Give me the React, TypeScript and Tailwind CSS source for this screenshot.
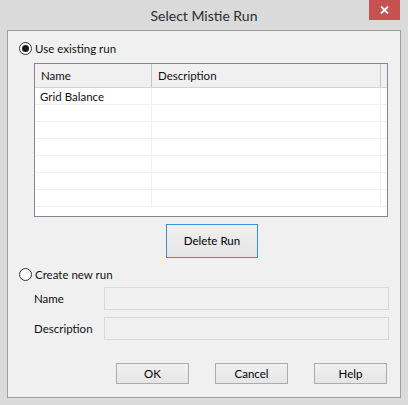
import React from 'react'

const font = { fontFamily: 'Lato, "Segoe UI", "Noto Sans", sans-serif' }

function Radio({ checked }: { checked?: boolean }) {
  return (
    <span className="flex h-[13px] w-[13px] items-center justify-center rounded-full border border-[#333] bg-white">
      {checked && <span className="h-[7px] w-[7px] rounded-full bg-[#1a1a1a]" />}
    </span>
  )
}

function Button({ label, focused, className }: { label: string; focused?: boolean; className?: string }) {
  return (
    <div
      className={
        'flex items-center justify-center text-[11.5px] text-black bg-gradient-to-b from-[#f0f0f0] to-[#e5e5e5] border ' +
        (focused ? 'border-[#3c8fe0] ' : 'border-[#acacac] ') +
        (className ?? '')
      }
    >
      {label}
    </div>
  )
}

export default function App() {
  const rows = [0, 1, 2, 3, 4, 5, 6]
  return (
    <div className="flex h-[405px] w-[408px] flex-col bg-[#dadada] text-[#111]" style={font}>
      {/* title bar */}
      <div className="flex h-[30px] items-start">
        <div className="w-[62px]" />
        <div className="flex h-[30px] flex-1 items-center justify-center text-[14px] text-[#2b2b2b]">
          Select Mistie Run
        </div>
        <div className="flex w-[62px] justify-end pr-[8px]">
          <div className="flex h-[20px] w-[31px] items-center justify-center bg-[#c75050]">
            <svg width="9" height="8" viewBox="0 0 9 8">
              <path d="M1 0.5 L8 7.5 M8 0.5 L1 7.5" stroke="white" strokeWidth="1.8" />
            </svg>
          </div>
        </div>
      </div>

      {/* client */}
      <div className="mx-[7px] mb-[7px] flex flex-1 flex-col border border-[#9f9f9f] bg-[#f0f0f0] text-[11.5px]">
        <div className="ml-[11px] mt-[10px] flex h-[14px] items-center gap-[3px]">
          <Radio checked />
          <span className="pt-[1px]">Use existing run</span>
        </div>

        {/* list */}
        <div className="ml-[26px] mt-[8px] h-[154px] w-[354px] border border-[#828790] bg-white">
          <div className="flex h-[24px] border-b border-[#d5d5d5] bg-[#f0f0f0]">
            <div className="flex w-[117px] items-center border-r border-[#c5c5c5] pl-[6px] pt-[1px]">Name</div>
            <div className="flex w-[229px] items-center border-r border-[#c5c5c5] pl-[6px] pt-[1px]">Description</div>
          </div>
          {rows.map((r) => (
            <div key={r} className="flex h-[17px] border-b border-[#f0f0f0]">
              <div className="flex w-[117px] items-center border-r border-[#f0f0f0] pl-[5px] pt-[2px]">
                {r === 0 ? 'Grid Balance' : ''}
              </div>
              <div className="w-[229px] border-r border-[#f0f0f0]" />
            </div>
          ))}
        </div>

        <div className="mt-[7px] flex">
          <Button label="Delete Run" focused className="ml-[158px] h-[34px] w-[92px]" />
        </div>

        <div className="ml-[11px] mt-[9px] flex h-[14px] items-center gap-[3px]">
          <Radio />
          <span className="pt-[1px]">Create new run</span>
        </div>

        <div className="mt-[6px] flex items-center">
          <span className="w-[96px] pl-[26px]">Name</span>
          <div className="h-[23px] w-[285px] border border-[#d9d9d9] bg-[#f0f0f0]" />
        </div>
        <div className="mt-[7px] flex items-center">
          <span className="w-[96px] pl-[26px]">Description</span>
          <div className="h-[23px] w-[285px] border border-[#d9d9d9] bg-[#f0f0f0]" />
        </div>

        <div className="mt-[23px] flex pl-[108px] gap-[26px]">
          <Button label="OK" className="h-[21px] w-[73px]" />
          <Button label="Cancel" className="h-[21px] w-[73px]" />
          <Button label="Help" className="h-[21px] w-[73px]" />
        </div>
      </div>
    </div>
  )
}
